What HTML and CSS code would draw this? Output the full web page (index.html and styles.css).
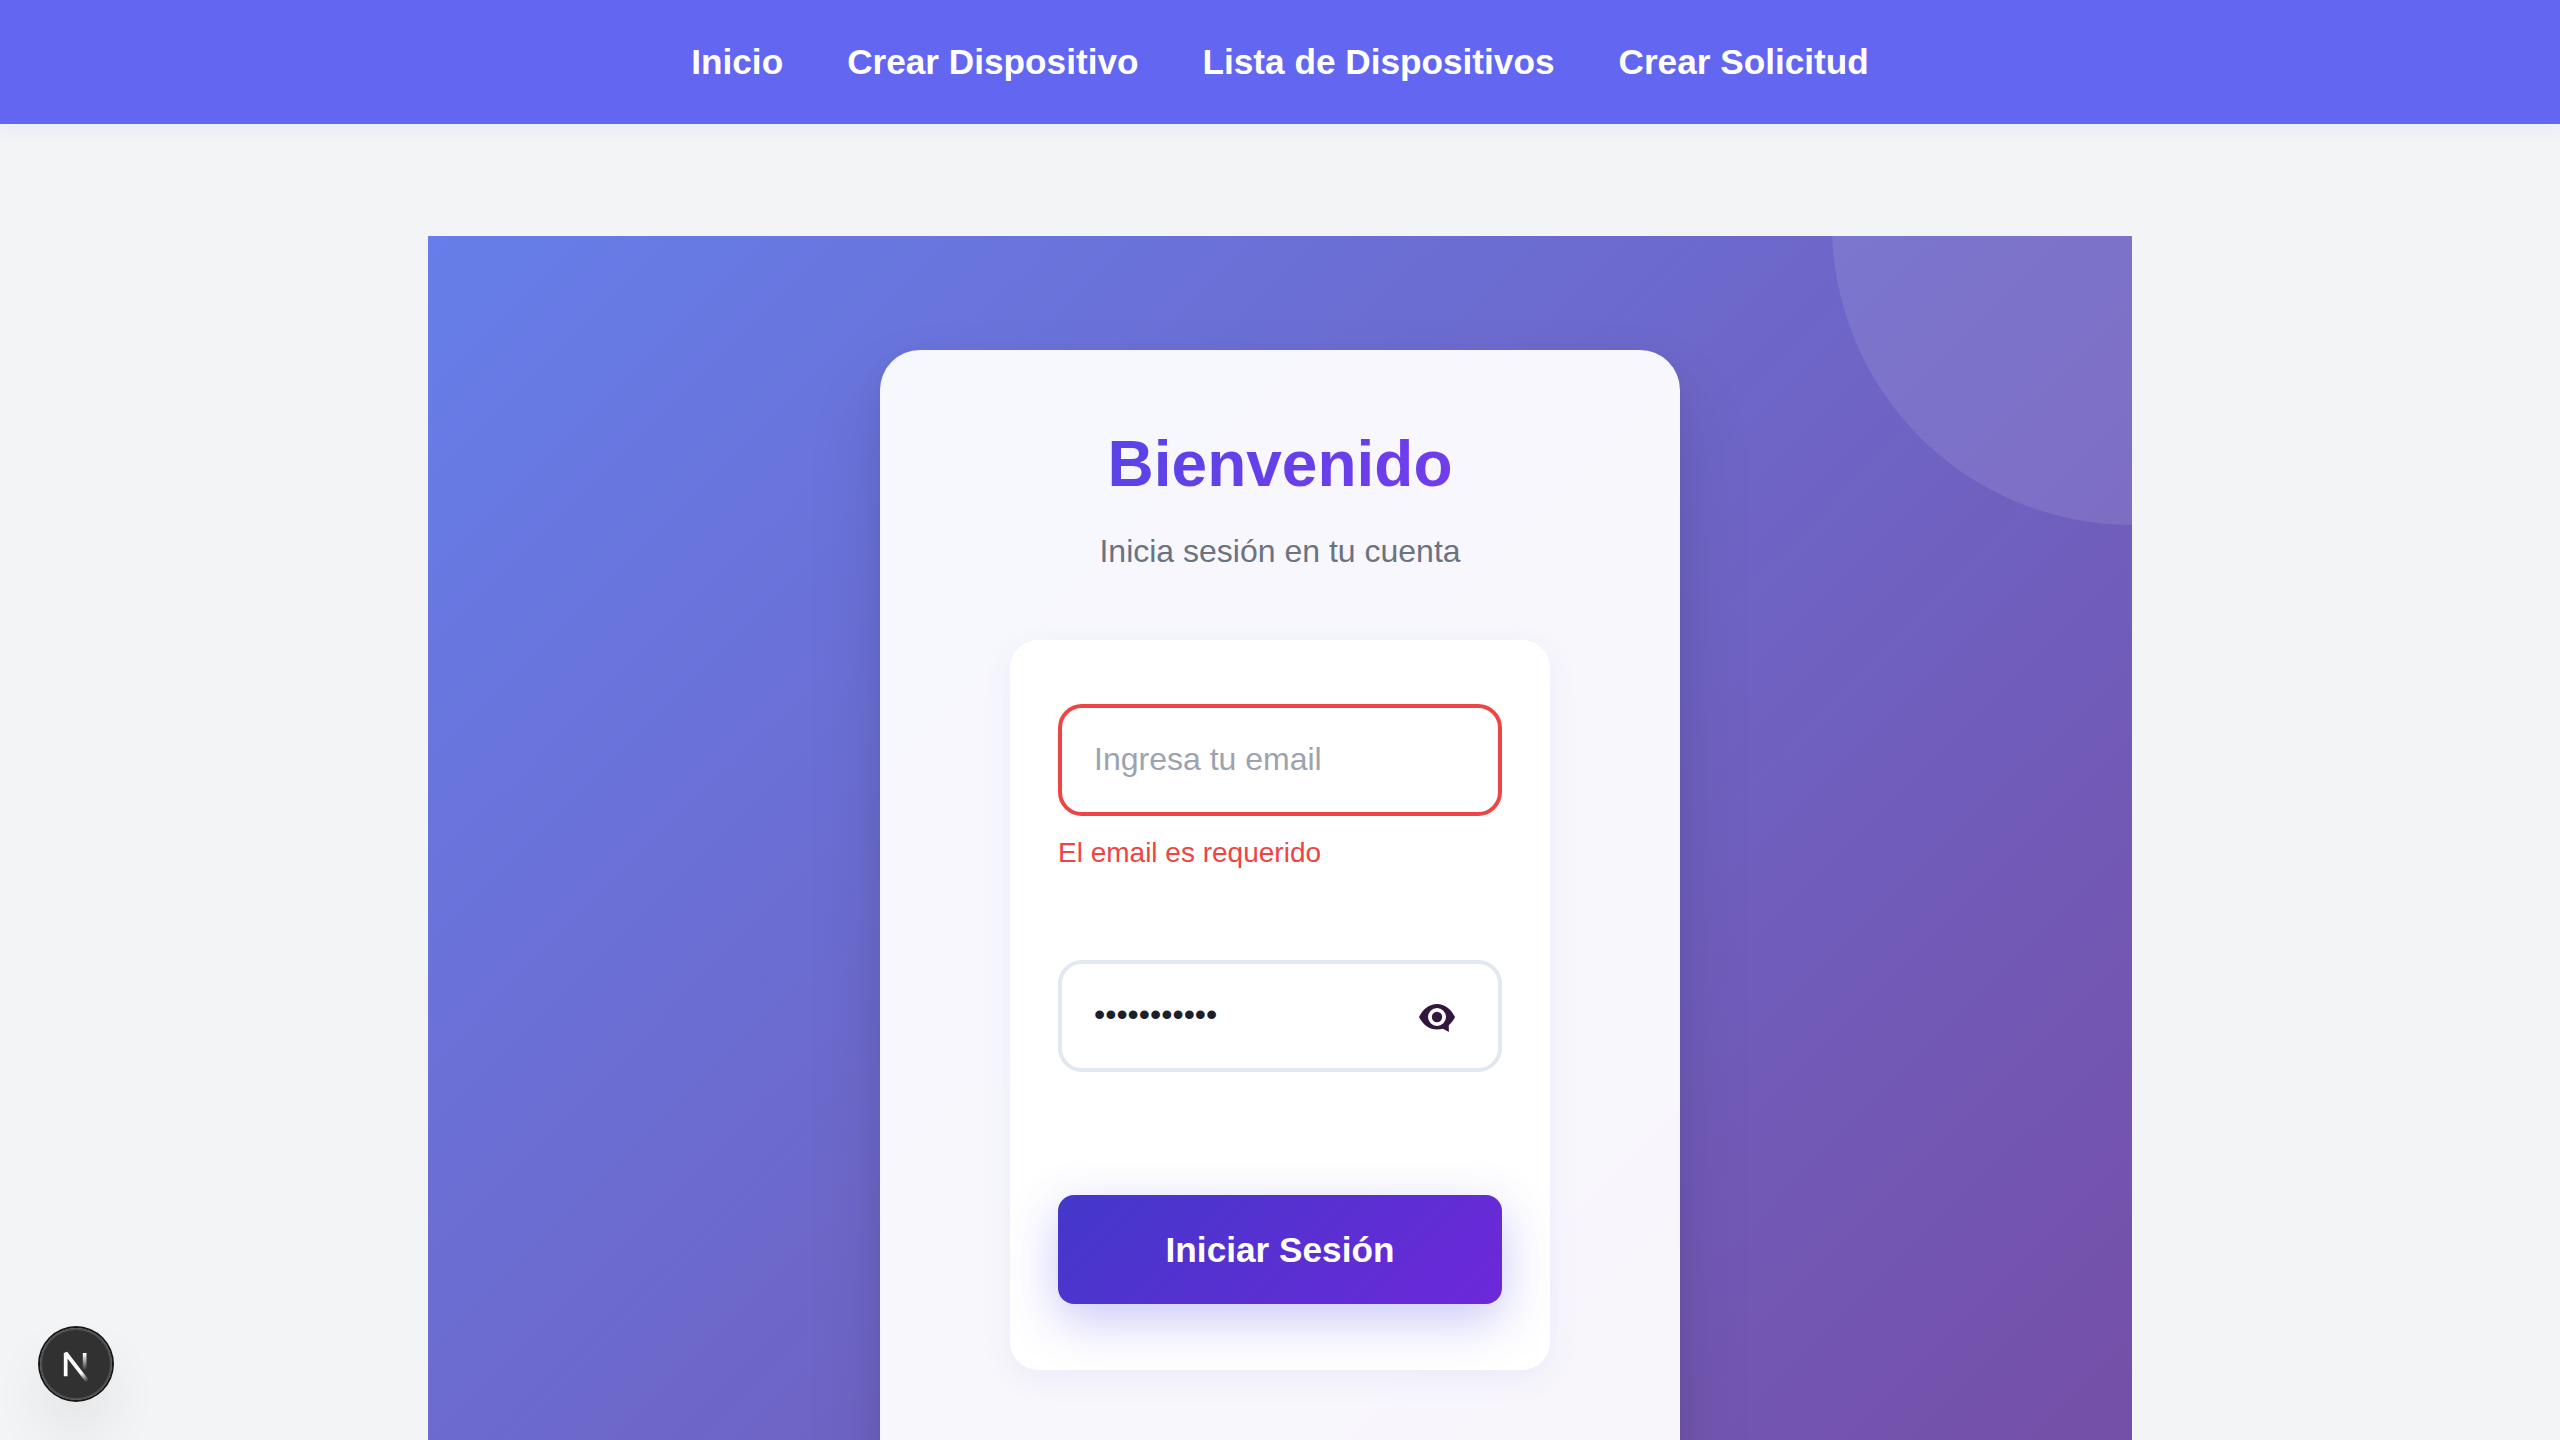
FILE: index.html
```html
<!DOCTYPE html>
<html lang="es">
<head>
<meta charset="utf-8">
<title>Iniciar Sesión</title>
<link rel="stylesheet" href="styles.css">
</head>
<body>
<nav class="navbar">
  <a class="nav-link">Inicio</a>
  <a class="nav-link">Crear Dispositivo</a>
  <a class="nav-link">Lista de Dispositivos</a>
  <a class="nav-link">Crear Solicitud</a>
</nav>
<main class="content">
  <section class="hero">
    <div class="card">
      <h1 class="title">Bienvenido</h1>
      <p class="subtitle">Inicia sesión en tu cuenta</p>
      <form class="form">
        <div class="field">
          <input class="input input-error" type="text" placeholder="Ingresa tu email">
          <p class="error">El email es requerido</p>
        </div>
        <div class="field password">
          <input class="input input-password" type="password" value="contrasena1">
          <svg class="eye" viewBox="0 0 36 28" aria-hidden="true">
            <path fill="#31173d" fill-rule="evenodd" d="M0 13C4 5 10.500 0 18 0s14 5 18 13c-1.500 3.300-3.700 6.100-6.200 8.200V28l-5.800-3.300c-1.900.5-3.900.8-6 .8C10.500 25.500 4 21 0 13ZM18 4a9 9 0 1 0 0 18a9 9 0 0 0 0-18Z"/>
            <circle cx="18" cy="13" r="5.200" fill="#31173d"/>
          </svg>
        </div>
        <button class="submit" type="button">Iniciar Sesión</button>
      </form>
    </div>
  </section>
</main>
<div class="dev-badge">
  <svg class="dev-mark" viewBox="0 0 36 36" fill="none" aria-hidden="true">
    <g transform="translate(10.5 11.500)" stroke-width="1.860">
      <path d="M13.300 15.200 2.340 1v11.600" stroke="url(#fade-diagonal)" stroke-linejoin="bevel"/>
      <path d="M11.825 1v12.100" stroke="url(#fade-bar)"/>
    </g>
    <defs>
      <linearGradient id="fade-diagonal" gradientUnits="userSpaceOnUse" x1="9.956" y1="11.123" x2="15.478" y2="17.967">
        <stop stop-color="#fff"/><stop offset=".604" stop-color="#fff" stop-opacity="0"/>
      </linearGradient>
      <linearGradient id="fade-bar" gradientUnits="userSpaceOnUse" x1="11.822" y1="1.400" x2="11.791" y2="9.625">
        <stop stop-color="#fff"/><stop offset="1" stop-color="#fff" stop-opacity="0"/>
      </linearGradient>
    </defs>
  </svg>
</div>
</body>
</html>
```
FILE: styles.css
```css
* {
  box-sizing: border-box;
  margin: 0;
  padding: 0;
}

body {
  height: 1440px;
  overflow: hidden;
  background: #f3f4f6;
  font-family: "Liberation Sans", Arial, sans-serif;
}

.navbar {
  position: relative;
  display: flex;
  justify-content: center;
  align-items: center;
  gap: 64px;
  height: 124px;
  background: #6366f1;
  box-shadow: 0 4px 16px rgba(99, 102, 241, 0.08);
}

.nav-link {
  color: #fff;
  font-size: 35.2px;
  font-weight: 700;
}

.content {
  padding-top: 112px;
}

.hero {
  position: relative;
  display: flex;
  justify-content: center;
  align-items: flex-start;
  width: 1704px;
  height: 1440px;
  margin: 0 auto;
  padding-top: 114px;
  overflow: hidden;
  background: linear-gradient(135deg, #667eea 0%, #764ba2 100%);
}

.hero::before {
  content: "";
  position: absolute;
  top: -311px;
  right: -300px;
  width: 600px;
  height: 600px;
  border-radius: 50%;
  background: rgba(255, 255, 255, 0.1);
}

.card {
  position: relative;
  display: flex;
  flex-direction: column;
  align-items: center;
  width: 800px;
  height: 1212px;
  padding-top: 77px;
  border-radius: 40px;
  background: rgba(255, 255, 255, 0.95);
  box-shadow: 0 40px 80px rgba(0, 0, 0, 0.1), 0 16px 32px rgba(0, 0, 0, 0.06);
}

.title {
  width: 640px;
  text-align: center;
  font-size: 64px;
  line-height: 74px;
  background: linear-gradient(135deg, #4f46e5, #7c3aed);
  -webkit-background-clip: text;
  background-clip: text;
  color: transparent;
}

.subtitle {
  margin-top: 31px;
  color: #6b7280;
  font-size: 32px;
  line-height: 38px;
}

.form {
  width: 540px;
  height: 730px;
  margin-top: 70px;
  padding: 64px 48px;
  border-radius: 28px;
  background: #fff;
  box-shadow: 0 8px 32px rgba(79, 70, 229, 0.07);
}

.field {
  height: 256px;
}

.input {
  display: block;
  width: 100%;
  height: 112px;
  padding: 0 32px 2px;
  border: 4px solid #e2e8f0;
  border-radius: 24px;
  background: #fff;
  color: #1a202c;
  font: 32px "Liberation Sans", Arial, sans-serif;
}

.input::placeholder {
  color: #9ca3af;
}

.input-error {
  border-color: #ef4444;
}

.input-password {
  padding-bottom: 4px;
}

.error {
  margin-top: 21px;
  color: #ef4444;
  font-size: 28px;
  line-height: 32px;
}

.password {
  position: relative;
  height: 235px;
}

.eye {
  position: absolute;
  top: 44px;
  right: 47px;
  width: 36px;
  height: 28px;
}

.submit {
  display: block;
  width: 100%;
  height: 109px;
  border: 0;
  border-radius: 16px;
  background: linear-gradient(135deg, #4338ca, #6d28d9);
  box-shadow: 0 16px 50px rgba(79, 70, 229, 0.3);
  color: #fff;
  font: 700 35.2px "Liberation Sans", Arial, sans-serif;
}

.dev-badge {
  position: fixed;
  left: 40px;
  bottom: 40px;
  width: 72px;
  height: 72px;
  border-radius: 50%;
  background: rgba(0, 0, 0, 0.8);
  box-shadow: 0 0 0 2px #171717, inset 0 0 0 2px rgba(255, 255, 255, 0.14), 0 32px 64px -16px rgba(0, 0, 0, 0.24);
}

.dev-mark {
  display: block;
  width: 72px;
  height: 72px;
}
```
